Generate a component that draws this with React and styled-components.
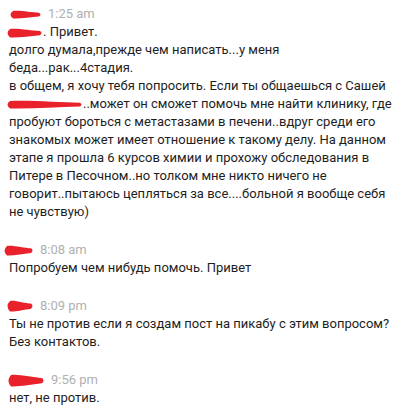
import React from "react"
import styled, { createGlobalStyle } from "styled-components"

const Global = createGlobalStyle`
  body {
    margin: 0;
    background: #fff;
  }
`

const Page = styled.div`
  width: 412px;
  height: 419px;
  overflow: hidden;
  padding: 5px 8px 0 9px;
  box-sizing: border-box;
  font-family: Roboto, "Noto Sans", sans-serif;
  font-size: 13px;
  line-height: 18px;
  color: #1e1e1e;
`

const Message = styled.div`
  margin-bottom: 20px;
`

const Header = styled.div`
  display: flex;
  align-items: center;
  height: 18px;
  margin-left: ${(p) => p.shift}px;
`

const Time = styled.span`
  color: #b0b0b0;
  font-size: 13px;
  margin-left: 6px;
`

const Body = styled.div`
  white-space: pre-line;
`

const Mark = styled.svg`
  display: inline-block;
  vertical-align: middle;
  margin-left: ${(p) => p.$left || 0}px;
`

// red marker blob hiding a name: thick on the left, tapering to the right
const Scribble = ({ w, h = 11, left }) => (
  <Mark width={w} height={h} viewBox={`0 0 ${w} ${h}`} $left={left}>
    <path
      d={`M5 1 C ${w * 0.35} 0, ${w * 0.7} ${h * 0.3}, ${w - 3} ${h * 0.3}
          Q ${w} ${h * 0.5}, ${w - 3} ${h * 0.72}
          C ${w * 0.65} ${h * 0.8}, ${w * 0.35} ${h}, 5 ${h - 0.5}
          Q 0 ${h / 2}, 5 1 Z`}
      fill="#e8212b"
    />
  </Mark>
)

const messages = [
  {
    shift: -1,
    scribble: 34,
    hh: 9,
    time: "1:25 am",
    body: (
      <>
        <Scribble w={38} h={10} left={-4} />. Привет.
        {"\n"}долго думала,прежде чем написать...у меня
        {"\n"}беда...рак...4стадия.
        {"\n"}в общем, я хочу тебя попросить. Если ты общаешься с Сашей
        {"\n"}
        <Scribble w={78} h={9} left={-4} />..может он сможет помочь мне найти клинику, где
        {"\n"}пробуют бороться с метастазами в печени..вдруг среди его
        {"\n"}знакомых может имеет отношение к такому делу. На данном
        {"\n"}этапе я прошла 6 курсов химии и прохожу обследования в
        {"\n"}Питере в Песочном..но толком мне никто ничего не
        {"\n"}говорит..пытаюсь цепляться за все....больной я вообще себя
        {"\n"}не чувствую)
      </>
    ),
  },
  {
    shift: -7,
    scribble: 32,
    hh: 11,
    time: "8:08 am",
    body: "Попробуем чем нибудь помочь. Привет",
  },
  {
    shift: -4,
    scribble: 29,
    hh: 12,
    time: "8:09 pm",
    body: "Ты не против если я создам пост на пикабу с этим вопросом?\nБез контактов.",
  },
  {
    shift: -3,
    scribble: 39,
    hh: 13,
    time: "9:56 pm",
    body: "нет, не против.",
  },
]

export default function App() {
  return (
    <>
      <Global />
      <Page>
        {messages.map((m, i) => (
          <Message key={i}>
            <Header shift={m.shift}>
              <Scribble w={m.scribble} h={m.hh} />
              <Time>{m.time}</Time>
            </Header>
            <Body>{m.body}</Body>
          </Message>
        ))}
      </Page>
    </>
  )
}
